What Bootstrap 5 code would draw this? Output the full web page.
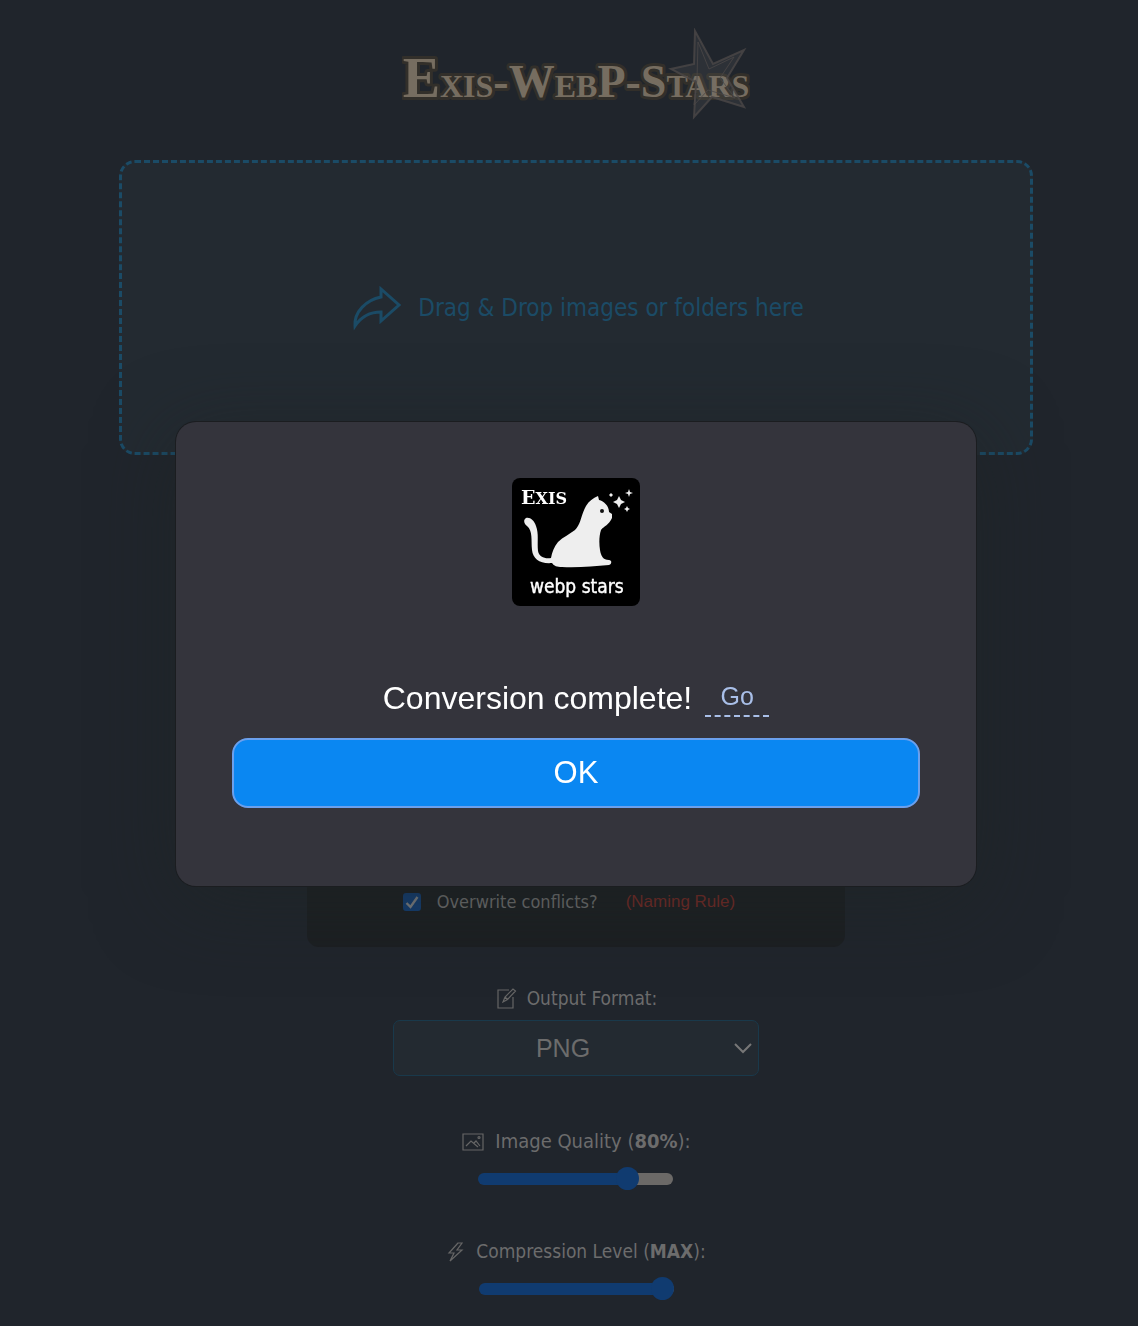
<!DOCTYPE html>
<html lang="en">
<head>
<meta charset="utf-8">
<meta name="viewport" content="width=device-width, initial-scale=1">
<title>Exis-WebP-Stars</title>
<link href="https://cdn.jsdelivr.net/npm/bootstrap@5.3.0/dist/css/bootstrap.min.css" rel="stylesheet">
<style>
  body { background: #20252c; color: #6c6c6c; font-family: "DejaVu Sans Condensed", "DejaVu Sans", sans-serif; overflow: hidden; }
  .app-shell { padding: 28px 105px 0 119px; }
  .brand { width: 348px; height: 92px; }
  .brand-text { font: bold 46px "Liberation Serif", serif; fill: #766d60; stroke: #322f2a; stroke-width: 6px; paint-order: stroke; stroke-linejoin: round; }
  .brand-text .cap { font-size: 56px; }
  .brand-text .minor { font-size: 32px; }
  .drop-zone { height: 295px; margin-top: 40px; padding-left: 4px; border: 3px dashed #1b4b66; border-radius: 16px; background: #232a31; color: #1b4b66; font-size: 24px; }
  .options { width: 538px; height: 420px; margin-top: 72px; padding: 0 14px 32px 0; border-radius: 12px; background: #1c1f22; color: #747474; font-size: 18px; }
  .options .form-check-input { width: 18px; height: 18px; margin: 0; border: 0; border-radius: 3px; background-color: #123f78; }
  .options .form-check-input:checked { background-image: none; }
  .tick-box { width: 18px; height: 18px; }
  .tick-box svg { top: 0; left: 0; pointer-events: none; }
  .rule-link { color: #7c2a25; font: 17px "Liberation Sans", Arial, sans-serif; }
  .field { font-size: 19px; line-height: 24px; }
  .field-output { margin-top: 39px; }
  .field-quality { margin-top: 53px; font-size: 20px; }
  .field-level { margin-top: 48px; }
  .format-select { appearance: none; width: 366px; height: 56px; margin-top: 10px; padding: 0 32px 0 6px; text-align: center; text-align-last: center; color: #6c6c6c; background: #232a31; border: 1px solid #19394b; border-radius: 7px; font: 25px "Liberation Sans", Arial, sans-serif; }
  .select-box svg { right: 6px; top: 32px; pointer-events: none; }
  .slider { appearance: none; -webkit-appearance: none; display: block; width: 195px; height: 24px; margin: 14px 0 0; background: transparent; }
  .slider::-webkit-slider-runnable-track { height: 12px; border-radius: 6px; background: linear-gradient(90deg, #103b70 var(--fill), #6b6967 var(--fill)); }
  .slider::-webkit-slider-thumb { -webkit-appearance: none; width: 23px; height: 23px; margin-top: -6px; border: 0; border-radius: 50%; background: #103b70; }
  .overlay { padding: 0 0 18px 14px; }
  .dialog-box { width: 800px; padding: 56px 56px 78px; border-radius: 20px; background: #34343c; color: #fff; font-family: "Liberation Sans", Arial, sans-serif; box-shadow: 0 0 0 1px #1b1d20, 0 16px 80px rgba(30, 36, 36, .6); }
  .app-icon { width: 128px; height: 128px; }
  .message { margin-top: 70px; gap: 13px; font-size: 32px; line-height: 44px; }
  .go-link { width: 64px; height: 38px; color: #a9bfe8; border-bottom: 2px dashed #a9bfe8; font-size: 25px; line-height: 34px; }
  .ok-btn { height: 70px; margin-top: 18px; color: #fff; background: #0a87f2; border: 2px solid #6ba0ed; border-radius: 16px; font-size: 31px; }
  .ok-btn:hover { color: #fff; background: #0a7be0; }
</style>
</head>
<body>
<main class="app-shell d-flex flex-column align-items-center vh-100">
  <svg class="brand" viewBox="0 0 348 92" role="img" aria-label="Exis-WebP-Stars">
    <text class="brand-text" x="174" y="69" text-anchor="middle"><tspan class="cap">E</tspan><tspan class="minor">XIS</tspan>-W<tspan class="minor">EB</tspan>P-S<tspan class="minor">TARS</tspan></text>
    <g fill="#777" fill-opacity=".15" stroke="#4b4747" stroke-opacity=".8" stroke-width="2">
      <path d="M293 3l18 33 31-14-17 28 17 29-32-10-18 20 2-35-25-13 23-5z"/>
      <path d="M296 14l11 27 25-12-14 21 15 20-27-8-14 15 3-26z" fill="none" stroke-width="1"/>
    </g>
  </svg>

  <section class="drop-zone d-flex align-items-center justify-content-center gap-3 w-100">
    <svg width="50" height="46" viewBox="0 0 50 46" fill="none" stroke="#1b4b66" stroke-width="3"><path d="M29 4v8C14 15 2 27 3 41c6-9 14-14 26-14v9l18-16z"/></svg>
    <span>Drag &amp; Drop images or folders here</span>
  </section>

  <section class="options d-flex align-items-end justify-content-center">
    <div class="d-flex align-items-center">
      <span class="tick-box position-relative me-3">
        <input class="form-check-input d-block" type="checkbox" id="overwrite" checked>
        <svg class="position-absolute" width="18" height="18" viewBox="0 0 18 18" fill="none" stroke="#85878a" stroke-width="2.4"><path d="M3.500 10l4 4 7-10"/></svg>
      </span>
      <label for="overwrite">Overwrite conflicts?</label>
      <a class="rule-link text-decoration-none ms-4 ps-1" href="#">(Naming Rule)</a>
    </div>
  </section>

  <div class="field field-output select-box position-relative">
    <label class="d-flex align-items-center justify-content-center gap-2" for="format">
      <svg width="24" height="24" viewBox="0 0 24 24" fill="none" stroke="#666" stroke-width="1.200"><path d="M14 4H3v18h15V11M8 16l2-5 8-8 2.500 2-8 8.500zM10 11l2.500 2.500"/></svg>
      Output Format:
    </label>
    <select class="format-select d-block" id="format"><option>PNG</option><option>WebP</option><option>JPEG</option></select>
    <svg class="position-absolute" width="20" height="56" viewBox="0 0 20 56" fill="none" stroke="#777" stroke-width="2"><path d="M2 26l8 8 8-8"/></svg>
  </div>

  <div class="field field-quality d-flex flex-column align-items-center">
    <label class="d-flex align-items-center" for="quality">
      <svg class="me-2" width="26" height="24" viewBox="0 0 26 24" fill="none" stroke="#666" stroke-width="1.200"><path d="M2 5h20v16H2zM5 17l5-5 7 6M13 14l2-2 4 5"/><circle cx="18" cy="8.500" r="1"/></svg>
      <span>Image Quality (<b>80%</b>):</span>
    </label>
    <input class="slider" type="range" id="quality" min="0" max="100" value="80" style="--fill:77%">
  </div>

  <div class="field field-level d-flex flex-column align-items-center">
    <label class="d-flex align-items-center" for="level">
      <svg class="me-2" width="22" height="24" viewBox="0 0 22 24" fill="none" stroke="#666" stroke-width="1.200"><path d="M12 4L3 14h5l-4 8L16 11h-5l5-7z"/></svg>
      <span>Compression Level (<b>MAX</b>):</span>
    </label>
    <input class="slider" type="range" id="level" min="0" max="9" value="9" style="--fill:96%">
  </div>
</main>

<div class="overlay position-fixed top-0 start-0 w-100 h-100 d-flex align-items-center justify-content-center">
  <div class="dialog-box d-flex flex-column align-items-center" role="dialog" aria-modal="true" aria-labelledby="done">
    <svg class="app-icon" viewBox="0 0 128 128" role="img" aria-label="Exis webp stars">
      <rect width="128" height="128" rx="8" fill="#000"/>
      <path fill="#eee" d="M86 18C81 20 77 23 74 28C69 37 69 46 63 52C58 56 51 59 46 64C42 69 40 74 39 80C33 81 27 79 26 73C25 64 27 56 24 48C22 42 18 39 14 40C11 42 12 46 15 48C21 53 19 62 20 72C21 81 28 86 40 85C42 88 45 89 50 89C66 90 82 88 97 87C100 86 100 82 97 82C91 82 89 78 88 72C87 66 87 58 89 52C92 48 97 47 100 40L100 36L97 34C97 28 92 23 87 22Z"/>
      <circle cx="90" cy="33" r="2" fill="#111"/>
      <path fill="#eee" d="M107 18l2 4 4 2-4 2-2 4-2-4-4-2 4-2zM117 11l1 3 3 1-3 1-1 3-1-3-3-1 3-1zM115 28l1 2 2 1-2 1-1 2-1-2-2-1 2-1zM99 15l1 1 1 1-1 1-1 1-1-1-1-1 1-1z"/>
      <text x="9" y="26" fill="#fff" font-family="DejaVu Serif" font-weight="bold" font-size="19">E<tspan font-size="16">XIS</tspan></text>
      <text x="18" y="115" fill="#fff" font-family="DejaVu Sans Condensed" font-size="19" stroke="#fff" stroke-width=".4">webp stars</text>
    </svg>
    <div class="message d-flex align-items-center">
      <span id="done">Conversion complete!</span>
      <a class="go-link text-center text-decoration-none" href="#">Go</a>
    </div>
    <button type="button" class="ok-btn btn w-100">OK</button>
  </div>
</div>
<script src="https://cdn.jsdelivr.net/npm/bootstrap@5.3.0/dist/js/bootstrap.bundle.min.js"></script>
</body>
</html>
